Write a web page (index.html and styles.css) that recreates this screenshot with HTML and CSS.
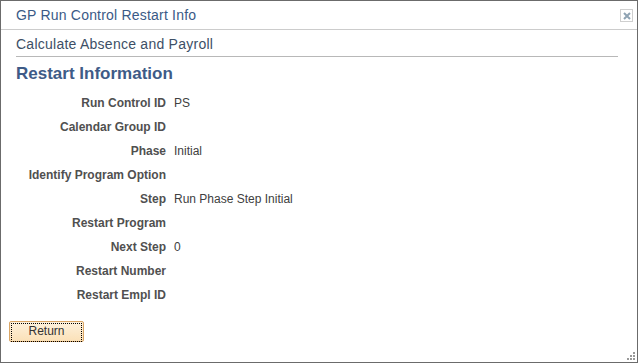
FILE: index.html
```html
<!DOCTYPE html>
<html lang="en">
<head>
    <meta charset="UTF-8">
    <title>GP Run Control Restart Info</title>
    <link rel="stylesheet" href="styles.css">
</head>
<body>
    <div class="window">
        <!-- title bar -->
        <div class="titlebar">
            <span class="title">GP Run Control Restart Info</span>
            <span class="close-btn">
                <svg width="8" height="8" viewBox="0 0 8 8"><path d="M1 1L7 7M7 1L1 7" stroke="#8fa3b3" stroke-width="2"/></svg>
            </span>
        </div>

        <div class="content">
            <div class="page-title">Calculate Absence and Payroll</div>
            <h2 class="section-title">Restart Information</h2>

            <div class="fields">
                <div class="label">Run Control ID</div><div class="value">PS</div>
                <div class="label">Calendar Group ID</div><div class="value"></div>
                <div class="label">Phase</div><div class="value">Initial</div>
                <div class="label">Identify Program Option</div><div class="value"></div>
                <div class="label">Step</div><div class="value">Run Phase Step Initial</div>
                <div class="label">Restart Program</div><div class="value"></div>
                <div class="label">Next Step</div><div class="value">0</div>
                <div class="label">Restart Number</div><div class="value"></div>
                <div class="label">Restart Empl ID</div><div class="value"></div>
            </div>

            <button class="return-btn"><span>Return</span></button>
        </div>

        <!-- resize grip -->
        <svg class="grip" width="10" height="10" viewBox="0 0 10 10">
            <rect x="7" y="1" width="2" height="2" fill="#999"/>
            <rect x="4" y="4" width="2" height="2" fill="#999"/>
            <rect x="7" y="4" width="2" height="2" fill="#999"/>
            <rect x="1" y="7" width="2" height="2" fill="#999"/>
            <rect x="4" y="7" width="2" height="2" fill="#999"/>
            <rect x="7" y="7" width="2" height="2" fill="#999"/>
        </svg>
    </div>
</body>
</html>
```

FILE: styles.css
```css
body {
    margin: 0;
    font-family: Arial, "Liberation Sans", sans-serif;
    background: #fff;
}

.window {
    position: relative;
    width: 638px;
    height: 363px;
    box-sizing: border-box;
    border: 1px solid #6b6b6b;
    background: #fff;
}

.titlebar {
    display: flex;
    align-items: center;
    justify-content: space-between;
    height: 28px;
    padding: 0 4px 0 15px;
    border-bottom: 1px solid #cccccc;
}

.title {
    font-size: 14px;
    letter-spacing: 0.2px;
    color: #3a5a86;
}

.close-btn {
    display: flex;
    align-items: center;
    justify-content: center;
    width: 11px;
    height: 11px;
    border: 1px solid #cfcfcf;
    margin-top: 1px;
}

.content {
    padding: 6px 19px 0 15px;
}

.page-title {
    font-size: 14px;
    letter-spacing: 0.25px;
    color: #3d4f66;
    padding-bottom: 4px;
    border-bottom: 1px solid #b8b8b8;
}

.section-title {
    margin: 7px 0 0;
    font-size: 17px;
    font-weight: bold;
    color: #3e5b87;
}

.fields {
    display: grid;
    grid-template-columns: 150px auto;
    column-gap: 8px;
    grid-auto-rows: 24px;
    margin-top: 7px;
    font-size: 12px;
}

.label,
.value {
    display: flex;
    align-items: center;
}

.label {
    justify-content: flex-end;
    font-weight: bold;
    color: #505050;
}

.value {
    color: #404040;
}

.return-btn {
    margin: 14px 0 0 -7px;
    width: 75px;
    height: 21px;
    padding: 1px;
    border: 1px solid #daa666;
    border-radius: 2px;
    background: linear-gradient(#fdf1dc, #fbe1b8);
    font-family: Arial, "Liberation Sans", sans-serif;
    font-size: 12px;
    color: #333;
}

.return-btn span {
    display: block;
    height: 100%;
    line-height: 15px;
    border: 1px dotted #000;
}

.grip {
    position: absolute;
    right: 1px;
    bottom: 1px;
}
```
